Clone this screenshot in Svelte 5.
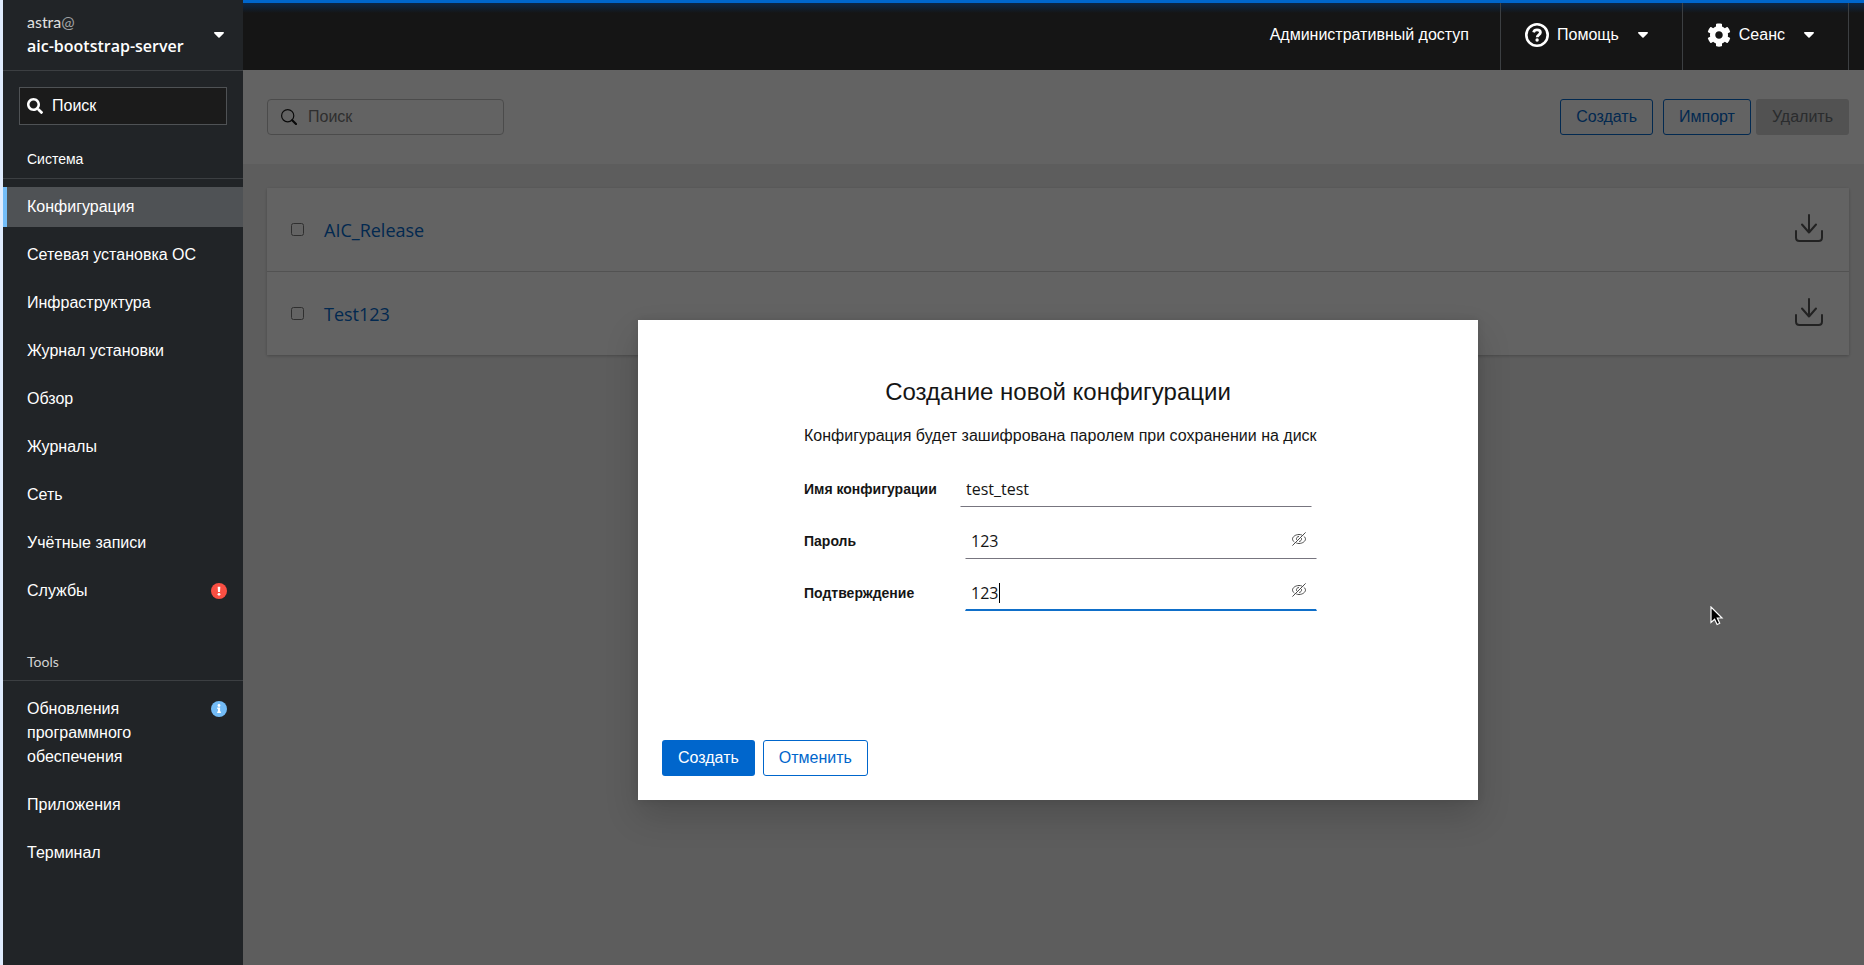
<script>
  const systemItems = [
    { label: 'Конфигурация', current: true },
    { label: 'Сетевая установка ОС' },
    { label: 'Инфраструктура' },
    { label: 'Журнал установки' },
    { label: 'Обзор' },
    { label: 'Журналы' },
    { label: 'Сеть' },
    { label: 'Учётные записи' },
    { label: 'Службы', status: 'error' },
  ]

  const toolItems = [
    { label: 'Обновления программного обеспечения', status: 'info' },
    { label: 'Приложения' },
    { label: 'Терминал' },
  ]

  let configs = $state([
    { name: 'AIC_Release', checked: false },
    { name: 'Test123', checked: false },
  ])

  let name = $state('test_test')
  let password = $state('123')
  let confirmation = $state('123')
  let showPassword = $state(true)
  let showConfirmation = $state(true)

  let hasSelection = $derived(configs.some((c) => c.checked))
</script>

{#snippet caret()}
  <svg class="caret" viewBox="0 0 10 6" aria-hidden="true">
    <path d="M.8 0h8.4c.7 0 1 .8.6 1.2L5.6 5.5a.9.9 0 0 1-1.2 0L.2 1.2C-.2.8.1 0 .8 0z" fill="currentColor" />
  </svg>
{/snippet}

{#snippet eyeSlash()}
  <svg viewBox="0 0 14 14" fill="none" stroke="#4a4a4a" aria-hidden="true">
    <path d="M2.3 10C1.2 9.200 .5 8 .5 7c0-2 2.700-4.500 6.500-4.500 1.100 0 2 .2 2.900.5M11.800 4.300c1.100.8 1.700 1.800 1.700 2.700 0 2-2.700 4.500-6.500 4.500-1 0-1.900-.2-2.700-.5" />
    <path d="M4.600 7.800C4 6 5.200 4.500 7 4.500M9.500 6.200c.4 1.600-.8 3.200-2.400 3.300" />
    <path d="M.4 13.600 13.600.4" />
  </svg>
{/snippet}

{#snippet navList(items)}
  <ul>
    {#each items as item}
      <li>
        <a href="#nav" class:current={item.current} aria-current={item.current ? 'page' : undefined}>
          <span class="nav-label">{item.label}</span>
          {#if item.status === 'error'}
            <svg class="status" viewBox="0 0 16 16" aria-hidden="true">
              <circle cx="8" cy="8" r="8" fill="#fa4f43" />
              <path d="M6.700 3.700h2.600L9 9H7z" fill="#fff" />
              <circle cx="8" cy="11.300" r="1.400" fill="#fff" />
            </svg>
          {:else if item.status === 'info'}
            <svg class="status" viewBox="0 0 16 16" aria-hidden="true">
              <circle cx="8" cy="8" r="8" fill="#73bcf7" />
              <circle cx="8" cy="4.500" r="1.400" fill="#fff" />
              <path d="M6.200 6.600h2.900v4h.8v1.500H6.200v-1.500H7V8.100h-.8z" fill="#fff" />
            </svg>
          {/if}
        </a>
      </li>
    {/each}
  </ul>
{/snippet}

<div class="page">
  <aside class="sidebar">
    <button class="host">
      <span class="host-text">
        <span class="user">astra<span class="at">@</span></span>
        <span class="hostname">aic-bootstrap-server</span>
      </span>
      {@render caret()}
    </button>

    <label class="nav-search">
      <svg viewBox="0 0 512 512" aria-hidden="true">
        <path
          d="M505 442.700 405.300 343c-4.500-4.500-10.600-7-17-7H372c27.600-35.300 44-79.700 44-128C416 93.100 322.900 0 208 0S0 93.100 0 208s93.100 208 208 208c48.300 0 92.700-16.400 128-44v16.300c0 6.400 2.500 12.500 7 17l99.700 99.700c9.400 9.400 24.600 9.400 33.900 0l28.300-28.300c9.400-9.400 9.400-24.600.1-34zM208 336c-70.700 0-128-57.200-128-128 0-70.700 57.200-128 128-128 70.700 0 128 57.200 128 128 0 70.700-57.200 128-128 128z"
          fill="currentColor"
        />
      </svg>
      <input type="text" placeholder="Поиск" aria-label="Поиск" />
    </label>

    <nav>
      <section>
        <h2>Система</h2>
        {@render navList(systemItems)}
      </section>
      <section>
        <h2 class="muted">Tools</h2>
        {@render navList(toolItems)}
      </section>
    </nav>
  </aside>

  <div class="main">
    <header class="topbar">
      <button class="access">Административный доступ</button>
      <button class="menu">
        <svg class="menu-icon" viewBox="0 0 24 24" fill="none" stroke="#fff" aria-hidden="true">
          <circle cx="12" cy="12" r="10.700" stroke-width="2.600" />
          <path d="M8.600 9.300C9 7.700 10.300 6.900 12 6.900c1.900 0 3.400 1.100 3.400 2.700 0 2.300-3.200 2.300-3.200 4.600" stroke-width="2.800" />
          <circle cx="12.100" cy="17" r="1.700" fill="#fff" stroke="none" />
        </svg>
        Помощь
        {@render caret()}
      </button>
      <button class="menu">
        <svg class="menu-icon" viewBox="0 0 512 512" aria-hidden="true">
          <path
            d="M487.400 315.700l-42.600-24.600c4.300-23.200 4.300-47 0-70.200l42.600-24.600c4.900-2.800 7.100-8.600 5.500-14-11.100-35.600-30-67.800-54.700-94.600-3.800-4.100-10-5.100-14.800-2.300L380.800 110c-17.900-15.400-38.500-27.300-60.800-35.100V25.800c0-5.600-3.900-10.500-9.400-11.700-36.700-8.200-74.300-7.800-109.200 0-5.500 1.200-9.400 6.100-9.400 11.700V75c-22.200 7.900-42.800 19.800-60.800 35.100L88.700 85.500c-4.900-2.800-11-1.900-14.800 2.300-24.700 26.700-43.600 58.900-54.700 94.600-1.700 5.400.6 11.200 5.500 14L67.300 221c-4.300 23.200-4.300 47 0 70.200l-42.600 24.600c-4.900 2.800-7.100 8.600-5.500 14 11.100 35.600 30 67.800 54.700 94.600 3.800 4.100 10 5.100 14.800 2.300l42.600-24.600c17.900 15.400 38.500 27.300 60.800 35.100v49.200c0 5.600 3.900 10.500 9.400 11.700 36.700 8.200 74.300 7.800 109.200 0 5.500-1.200 9.400-6.100 9.400-11.700v-49.200c22.200-7.900 42.800-19.800 60.800-35.100l42.600 24.600c4.900 2.800 11 1.900 14.800-2.300 24.700-26.700 43.600-58.900 54.700-94.600 1.500-5.500-.7-11.300-5.600-14.100zM256 336c-44.100 0-80-35.900-80-80s35.900-80 80-80 80 35.900 80 80-35.900 80-80 80z"
            fill="#fff"
          />
        </svg>
        Сеанс
        {@render caret()}
      </button>
    </header>

    <div class="frame">
      <div class="toolbar">
        <label class="search">
          <svg viewBox="0 0 16 16" fill="none" stroke="#151515" aria-hidden="true">
            <circle cx="6.700" cy="6.700" r="6.100" stroke-width="1.200" />
            <path d="M11.200 11.200 15 15" stroke-width="2.200" stroke-linecap="round" />
          </svg>
          <input type="text" placeholder="Поиск" aria-label="Поиск" />
        </label>
        <div class="actions">
          <button class="btn secondary">Создать</button>
          <button class="btn secondary import">Импорт</button>
          <button class="btn disabled" disabled={!hasSelection}>Удалить</button>
        </div>
      </div>

      <ul class="configs">
        {#each configs as config}
          <li>
            <input type="checkbox" bind:checked={config.checked} aria-label={config.name} />
            <a class="latin" href="#config">{config.name}</a>
            <button class="download" aria-label="Скачать">
              <svg viewBox="0 0 32 32" fill="none" stroke="#545454" stroke-width="2" stroke-linecap="round" stroke-linejoin="round" aria-hidden="true">
                <path d="M16 3v17.500M9 12.500l7 8 7-8M3 19v6.500Q3 29 6.500 29h19q3.500 0 3.500-3.500V19" />
              </svg>
            </button>
          </li>
        {/each}
      </ul>

      <div class="backdrop">
        <div class="modal" role="dialog" aria-modal="true" aria-labelledby="modal-title">
          <form onsubmit={(e) => e.preventDefault()}>
            <h1 id="modal-title">Создание новой конфигурации</h1>
            <p>Конфигурация будет зашифрована паролем при сохранении на диск</p>

            <div class="row">
              <label for="config-name">Имя конфигурации</label>
              <div class="field">
                <input id="config-name" class="latin" type="text" bind:value={name} />
              </div>
            </div>
            <div class="row">
              <label for="config-password">Пароль</label>
              <div class="field secret">
                <input id="config-password" class="latin" type={showPassword ? 'text' : 'password'} bind:value={password} />
                <button type="button" class="eye" aria-label="Показать пароль" onclick={() => (showPassword = !showPassword)}>
                  {@render eyeSlash()}
                </button>
              </div>
            </div>
            <div class="row">
              <label for="config-confirm">Подтверждение</label>
              <div class="field secret active">
                <input id="config-confirm" class="latin" type={showConfirmation ? 'text' : 'password'} bind:value={confirmation} />
                <button type="button" class="eye" aria-label="Показать пароль" onclick={() => (showConfirmation = !showConfirmation)}>
                  {@render eyeSlash()}
                </button>
              </div>
            </div>
          </form>

          <footer>
            <button class="btn primary">Создать</button>
            <button class="btn secondary">Отменить</button>
          </footer>
        </div>
      </div>
    </div>
  </div>

  <svg class="pointer" viewBox="0 0 14 20" aria-hidden="true">
    <path d="M1 1v15.500l3.600-3.300 2.500 5.300 2.600-1.200L7.300 12H12z" fill="#000" stroke="#fff" stroke-width="1.200" />
  </svg>
</div>

<style>
  :global(body) {
    margin: 0;
    font-family: 'Liberation Sans', Arial, sans-serif;
    font-size: 16px;
    line-height: 24px;
    color: #151515;
  }

  * {
    box-sizing: border-box;
  }

  button,
  input {
    font: inherit;
    color: inherit;
  }

  button {
    cursor: pointer;
  }

  ul {
    list-style: none;
    margin: 0;
    padding: 0;
  }

  a {
    text-decoration: none;
  }

  .latin,
  .hostname {
    font-family: 'Open Sans', 'Liberation Sans', sans-serif;
  }

  .user,
  h2.muted {
    font-family: Lato, 'Liberation Sans', sans-serif;
  }

  .page {
    position: relative;
    display: grid;
    grid-template-columns: 243px 1fr;
    min-height: 100vh;
    overflow: hidden;
  }

  /* sidebar */
  .sidebar {
    border-left: 3px solid #dfebfd;
    background: #212427;
    color: #fff;
  }

  .host {
    display: flex;
    align-items: center;
    justify-content: space-between;
    width: 100%;
    height: 71px;
    padding: 0 19px 0 24px;
    border: 0;
    border-bottom: 1px solid #3c3f42;
    background: none;
    text-align: left;
  }

  .host-text {
    display: flex;
    flex-direction: column;
    padding-bottom: 2px;
  }

  .user {
    color: #e0e0e0;
  }

  .at {
    color: #a0a2a4;
  }

  .hostname {
    font-weight: 600;
  }

  .caret {
    width: 10px;
    height: 6px;
    flex: none;
  }

  .nav-search {
    display: flex;
    align-items: center;
    gap: 9px;
    height: 38px;
    margin: 16px 16px 24px;
    padding: 0 7px;
    border: 1px solid #4f5255;
    background: #1b1b1b;
  }

  .nav-search svg {
    width: 16px;
    height: 16px;
    flex: none;
  }

  .nav-search input,
  .search input {
    width: 100%;
    min-width: 0;
    padding: 0;
    border: 0;
    outline: 0;
    background: none;
  }

  .nav-search input::placeholder {
    color: #fff;
    opacity: 1;
  }

  section {
    margin-bottom: 40px;
  }

  h2 {
    margin: 0 0 8px;
    padding: 0 24px 8px;
    border-bottom: 1px solid #3c3f42;
    font-size: 14px;
    font-weight: 400;
    line-height: 21px;
  }

  h2.muted {
    color: #d2d2d2;
  }

  nav ul {
    display: flex;
    flex-direction: column;
    gap: 8px;
  }

  nav a {
    display: flex;
    justify-content: space-between;
    padding: 8px 16px 8px 20px;
    border-left: 4px solid transparent;
    color: #fff;
  }

  nav a.current {
    border-left-color: #73bcf7;
    background: #4f5255;
  }

  .nav-label {
    max-width: 170px;
  }

  .status {
    width: 16px;
    height: 16px;
    margin-top: 4px;
    flex: none;
  }

  /* top bar */
  .main {
    display: flex;
    flex-direction: column;
    min-width: 0;
  }

  .topbar {
    display: flex;
    justify-content: flex-end;
    height: 70px;
    padding-right: 15px;
    border-top: 3px solid #06c;
    background: linear-gradient(#0b2748, #151515 10px);
    color: #fff;
  }

  .topbar button {
    display: flex;
    align-items: center;
    padding: 0 31px 3px 24px;
    border: 0;
    background: none;
  }

  .topbar .menu {
    gap: 8px;
    padding-right: 34px;
    border-left: 1px solid #3c3f42;
  }

  .topbar .menu:last-child {
    border-right: 1px solid #3c3f42;
  }

  .menu .caret {
    margin-left: 11px;
  }

  .menu-icon {
    width: 24px;
    height: 24px;
  }

  /* content */
  .frame {
    position: relative;
    flex: 1;
    background: #f0f0f0;
  }

  .toolbar {
    display: flex;
    justify-content: space-between;
    padding: 29px 15px 29px 24px;
    background: #fff;
  }

  .search {
    display: flex;
    align-items: center;
    gap: 11px;
    width: 237px;
    height: 36px;
    padding: 0 13px;
    border: 1px solid #c0c0c0;
    border-radius: 4px;
  }

  .search svg {
    width: 16px;
    height: 16px;
    flex: none;
  }

  .search input::placeholder {
    color: #757575;
    opacity: 1;
  }

  .actions {
    display: flex;
    gap: 5px;
  }

  .import {
    margin-left: 5px;
  }

  .btn {
    padding: 5px 15px;
    border: 1px solid transparent;
    border-radius: 3px;
    background: none;
    white-space: nowrap;
  }

  .btn.primary {
    background: #06c;
    color: #fff;
  }

  .btn.secondary {
    border-color: #06c;
    color: #06c;
  }

  .btn.disabled {
    background: #d2d2d2;
    color: #6a6e73;
  }

  .configs {
    margin: 24px 15px 24px 24px;
    background: #fff;
    box-shadow: 0 1px 3px rgba(3, 3, 3, 0.25);
  }

  .configs li {
    display: flex;
    align-items: center;
    box-sizing: content-box;
    height: 83px;
    padding: 0 24px;
  }

  .configs li + li {
    border-top: 1px solid #d2d2d2;
  }

  .configs input {
    width: 13px;
    height: 13px;
    margin: 0 20px 0 0;
  }

  .configs a {
    flex: 1;
    font-size: 18px;
    color: #06c;
  }

  .download {
    padding: 0 0 4px;
    border: 0;
    background: none;
  }

  .download svg {
    display: block;
    width: 32px;
    height: 32px;
  }

  /* dialog */
  .backdrop {
    position: absolute;
    inset: 0;
    display: flex;
    align-items: flex-start;
    justify-content: center;
    padding: 250px 0 0 9px;
    background: rgba(3, 3, 3, 0.62);
  }

  .modal {
    display: flex;
    flex-direction: column;
    justify-content: space-between;
    width: 840px;
    min-height: 480px;
    padding: 56px 24px 24px;
    background: #fff;
    box-shadow: 0 16px 32px rgba(3, 3, 3, 0.16), 0 0 8px rgba(3, 3, 3, 0.1);
  }

  form {
    align-self: center;
    width: 508px;
  }

  h1 {
    margin: 0;
    font-size: 24px;
    font-weight: 400;
    line-height: 32px;
    text-align: center;
  }

  p {
    margin: 16px 0 23px;
    white-space: nowrap;
  }

  .row {
    display: grid;
    grid-template-columns: 156px 1fr;
    align-items: center;
    margin-bottom: 16px;
  }

  .row label {
    font-size: 14px;
    font-weight: 700;
  }

  .field {
    display: flex;
    height: 36px;
    padding: 0 5px;
    border: 1px solid transparent;
    border-bottom-color: #77757f;
  }

  .field input {
    flex: 1;
    min-width: 0;
    padding: 0;
    border: 0;
    outline: 0;
    background: none;
  }

  /* secret fields sit 5px to the right of the plain one */
  .field.secret {
    position: relative;
    margin: 0 -5px 0 5px;
  }

  .field.active {
    border-bottom: 2px solid #0f6fc9;
  }

  .field.active::after {
    content: '';
    position: absolute;
    top: 7px;
    left: 33px;
    width: 1px;
    height: 20px;
    background: #000;
  }

  .eye {
    padding: 0 5px 5px;
    border: 0;
    background: none;
  }

  .eye svg {
    display: block;
    width: 14px;
    height: 14px;
  }

  footer {
    display: flex;
    gap: 8px;
  }

  .pointer {
    position: absolute;
    top: 606px;
    left: 1710px;
    width: 14px;
    height: 20px;
  }
</style>
